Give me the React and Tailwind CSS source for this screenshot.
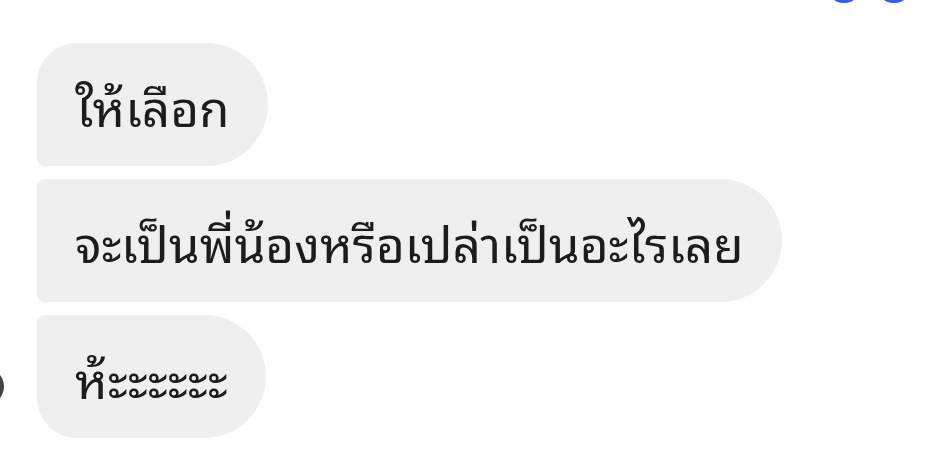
import React from "react";

const messages = [
  { text: "ให้เลือก", shape: "rounded-r-[62px] rounded-tl-[40px] rounded-bl-[8px]" },
  { text: "จะเป็นพี่น้องหรือเปล่าเป็นอะไรเลย", shape: "rounded-r-[62px] rounded-l-[8px]" },
  { text: "ห้ะะะะะะ", shape: "rounded-r-[62px] rounded-tl-[8px] rounded-bl-[40px]" },
];

export default function App() {
  return (
    <div className="relative w-[949px] h-[467px] overflow-hidden bg-white font-['Noto_Sans_Thai_Looped','Noto_Sans_Thai',sans-serif]">
      {/* seen avatars cut off at top */}
      <div className="absolute left-[826px] -top-[33px] w-[36px] h-[36px] rounded-full bg-[#3b5bdb]" />
      <div className="absolute left-[876px] -top-[33px] w-[36px] h-[36px] rounded-full bg-[#3b5bdb]" />
      {/* sender avatar cut off at left */}
      <div className="absolute -left-[33px] top-[368px] w-[37px] h-[37px] rounded-full bg-[#444]" />

      <div className="flex flex-col items-start gap-[13px] pt-[43px] pl-[37px]">
        {messages.map((m, i) => (
          <div
            key={i}
            className={`h-[123px] flex items-center px-[38px] bg-[#efefef] text-[#1c1c1c] text-[49.5px] font-normal leading-none ${m.shape}`}
          >
            {m.text}
          </div>
        ))}
      </div>
    </div>
  );
}
